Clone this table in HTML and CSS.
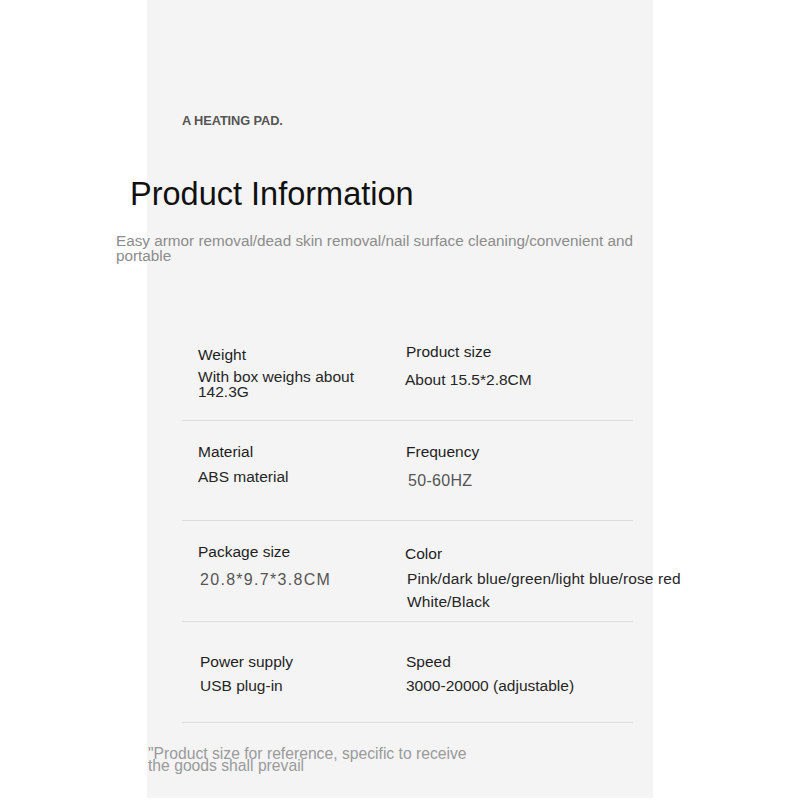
FILE: index.html
```html
<!DOCTYPE html>
<html lang="en">
<head>
<meta charset="utf-8">
<title>Product Information</title>
<link rel="stylesheet" href="styles.css">
</head>
<body>
<main class="page">
  <header class="head">
    <p class="brand">A HEATING PAD.</p>
    <h1 class="title">Product Information</h1>
    <p class="subtitle">Easy armor removal/dead skin removal/nail surface cleaning/convenient and portable</p>
  </header>

  <section class="specs">
    <div class="row row-1">
      <div class="cell c-l1">
        <div class="label">Weight</div>
        <div class="value tight">With box weighs about<br>142.3G</div>
      </div>
      <div class="cell c-r1">
        <div class="label">Product size</div>
        <div class="value shift-l">About 15.5*2.8CM</div>
      </div>
    </div>
    <div class="row row-2">
      <div class="cell c-l2">
        <div class="label">Material</div>
        <div class="value">ABS material</div>
      </div>
      <div class="cell c-r2">
        <div class="label">Frequency</div>
        <div class="value num num-freq">50-60HZ</div>
      </div>
    </div>
    <div class="row row-3">
      <div class="cell c-l3">
        <div class="label">Package size</div>
        <div class="value num num-pkg">20.8*9.7*3.8CM</div>
      </div>
      <div class="cell c-r3">
        <div class="label shift-l">Color</div>
        <div class="value colors">Pink/dark blue/green/light blue/rose red<br>White/Black</div>
      </div>
    </div>
    <div class="row row-4">
      <div class="cell c-l4">
        <div class="label">Power supply</div>
        <div class="value">USB plug-in</div>
      </div>
      <div class="cell c-r4">
        <div class="label">Speed</div>
        <div class="value">3000-20000 (adjustable)</div>
      </div>
    </div>
  </section>

  <p class="note">"Product size for reference, specific to receive the goods shall prevail</p>
</main>
</body>
</html>
```

FILE: styles.css
```css
* { box-sizing: border-box; }

html, body {
  margin: 0;
  padding: 0;
  background: #ffffff;
}

body {
  font-family: "Liberation Sans", Arial, sans-serif;
  color: #222;
}

.page {
  width: 800px;
  height: 798px;
  overflow: hidden;
  background: linear-gradient(to right, #ffffff 147px, #f4f4f4 147px, #f4f4f4 653px, #ffffff 653px);
  padding-top: 113px;
}

.head { margin: 0; }

.brand {
  margin: 0 0 0 182px;
  font-size: 12.8px;
  line-height: 16px;
  font-weight: bold;
  color: #555;
  letter-spacing: -0.1px;
}

.title {
  margin: 45px 0 0 130px;
  font-size: 32.5px;
  line-height: 40px;
  font-weight: normal;
  color: #111;
}

.subtitle {
  margin: 20px 0 0 116px;
  width: 535px;
  font-size: 15.3px;
  line-height: 14.5px;
  color: #8c8c8c;
}

.specs {
  margin: 57px 0 0 182px;
  width: 451px;
}

.row {
  display: grid;
  grid-template-columns: 208px 1fr;
  padding-left: 16px;
  border-bottom: 1px solid #dcdcdc;
  height: 101px;
}

.row-1 { height: 101px; }
.row-2 { height: 100px; }
.row-3 { height: 101px; }
.row-4 { height: 101px; }

.label {
  font-size: 15.5px;
  line-height: 20px;
  color: #1e1e1e;
}

.value {
  font-size: 15.5px;
  line-height: 20px;
  color: #262626;
}

.tight { line-height: 15px; }

.shift-l { margin-left: -1px; }

.num {
  font-size: 16px;
  color: #555;
}

.num-freq { letter-spacing: 0.3px; margin-left: 2px; }
.num-pkg { letter-spacing: 1.3px; margin-left: 2px; }

.colors {
  margin-left: 1px;
  line-height: 23px;
  white-space: nowrap;
  letter-spacing: 0.1px;
}

/* row 1 */
.c-l1 { padding-top: 25px; }
.c-l1 .value { margin-top: 4px; }
.c-r1 { padding-top: 22px; }
.c-r1 .value { margin-top: 8px; }

/* row 2 */
.c-l2 { padding-top: 21px; }
.c-l2 .value { margin-top: 5px; }
.c-r2 { padding-top: 21px; }
.c-r2 .value { margin-top: 9px; }

/* row 3 */
.c-l3 { padding-top: 21px; }
.c-l3 .value { margin-top: 8px; }
.c-r3 { padding-top: 23px; }
.c-r3 .value { margin-top: 3px; }

/* row 4 */
.c-l4 { padding-top: 30px; padding-left: 2px; }
.c-l4 .value { margin-top: 4px; }
.c-r4 { padding-top: 30px; }
.c-r4 .value { margin-top: 4px; }

.note {
  margin: 25px 0 0 148px;
  width: 330px;
  font-size: 15.7px;
  line-height: 11.7px;
  color: #9a9a9a;
}
```
